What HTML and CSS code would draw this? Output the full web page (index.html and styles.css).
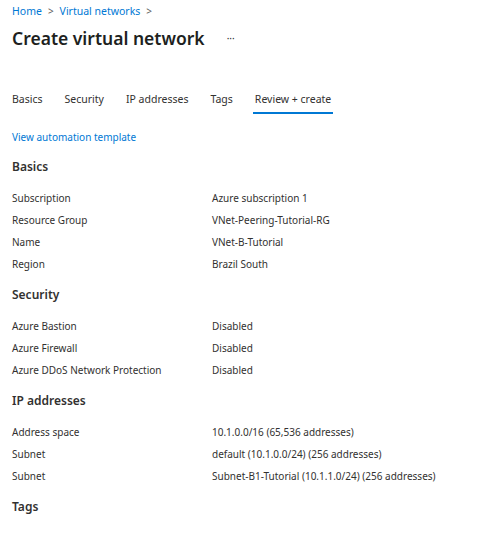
FILE: index.html
```html
<!DOCTYPE html>
<html>
<head>
<meta charset="utf-8">
<link rel="stylesheet" href="styles.css">
</head>
<body>
<div class="page">
  <nav class="crumbs">
    <a class="crumb">Home</a><span class="sep">&gt;</span><a class="crumb">Virtual networks</a><span class="sep">&gt;</span>
  </nav>
  <div class="titlebar">
    <h1 class="title">Create virtual network</h1>
    <span class="more">···</span>
  </div>
  <div class="tabs">
    <span class="tab">Basics</span>
    <span class="tab">Security</span>
    <span class="tab">IP addresses</span>
    <span class="tab">Tags</span>
    <span class="tab active">Review + create</span>
  </div>
  <a class="template">View automation template</a>

  <h2 class="section">Basics</h2>
  <div class="rows">
    <div class="row"><span class="label">Subscription</span><span class="value">Azure subscription 1</span></div>
    <div class="row"><span class="label">Resource Group</span><span class="value">VNet-Peering-Tutorial-RG</span></div>
    <div class="row"><span class="label">Name</span><span class="value">VNet-B-Tutorial</span></div>
    <div class="row"><span class="label">Region</span><span class="value">Brazil South</span></div>
  </div>

  <h2 class="section">Security</h2>
  <div class="rows">
    <div class="row"><span class="label">Azure Bastion</span><span class="value">Disabled</span></div>
    <div class="row"><span class="label">Azure Firewall</span><span class="value">Disabled</span></div>
    <div class="row"><span class="label">Azure DDoS Network Protection</span><span class="value">Disabled</span></div>
  </div>

  <h2 class="section">IP addresses</h2>
  <div class="rows">
    <div class="row"><span class="label">Address space</span><span class="value">10.1.0.0/16 (65,536 addresses)</span></div>
    <div class="row"><span class="label">Subnet</span><span class="value">default (10.1.0.0/24) (256 addresses)</span></div>
    <div class="row"><span class="label">Subnet</span><span class="value">Subnet-B1-Tutorial (10.1.1.0/24) (256 addresses)</span></div>
  </div>

  <h2 class="section">Tags</h2>
</div>
</body>
</html>
```

FILE: styles.css
```css
* { box-sizing: border-box; }
html, body { margin: 0; padding: 0; background: #fff; }
body { font-family: "Noto Sans", "Open Sans", sans-serif; color: #323130; }
.page { padding: 3px 12px 0 12px; }
.crumbs { display: flex; align-items: center; font-size: 10.5px; height: 16px; color: #0078d4; }
.crumb { color: #0078d4; }
.sep { color: #605e5c; margin: 0 6px 0 6px; font-size: 10px; }
.titlebar { display: flex; align-items: center; margin-top: 4px; height: 30px; }
.title { margin: 0; font-size: 17.5px; font-weight: 600; color: #201f1e; }
.more { margin-left: 22px; font-size: 10px; color: #323130; }
.tabs { display: flex; margin-top: 33px; height: 28px; align-items: stretch; }
.tab { font-size: 10.5px; padding: 0 2px; margin-right: 18px; display: flex; align-items: center; border-bottom: 2px solid transparent; }
.tab:first-child { padding-left: 0; }
.tab.active { border-bottom-color: #0078d4; }
.template { display: block; margin-top: 16px; font-size: 10px; color: #0078d4; }
.section { margin: 14px 0 0 0; font-size: 12px; font-weight: 600; color: #323130; height: 20px; }
.rows + .section { margin-top: 11px; }
.rows { margin-top: 9px; }
.row { display: grid; grid-template-columns: 200px 1fr; height: 22px; align-items: center; font-size: 10px; }
```
